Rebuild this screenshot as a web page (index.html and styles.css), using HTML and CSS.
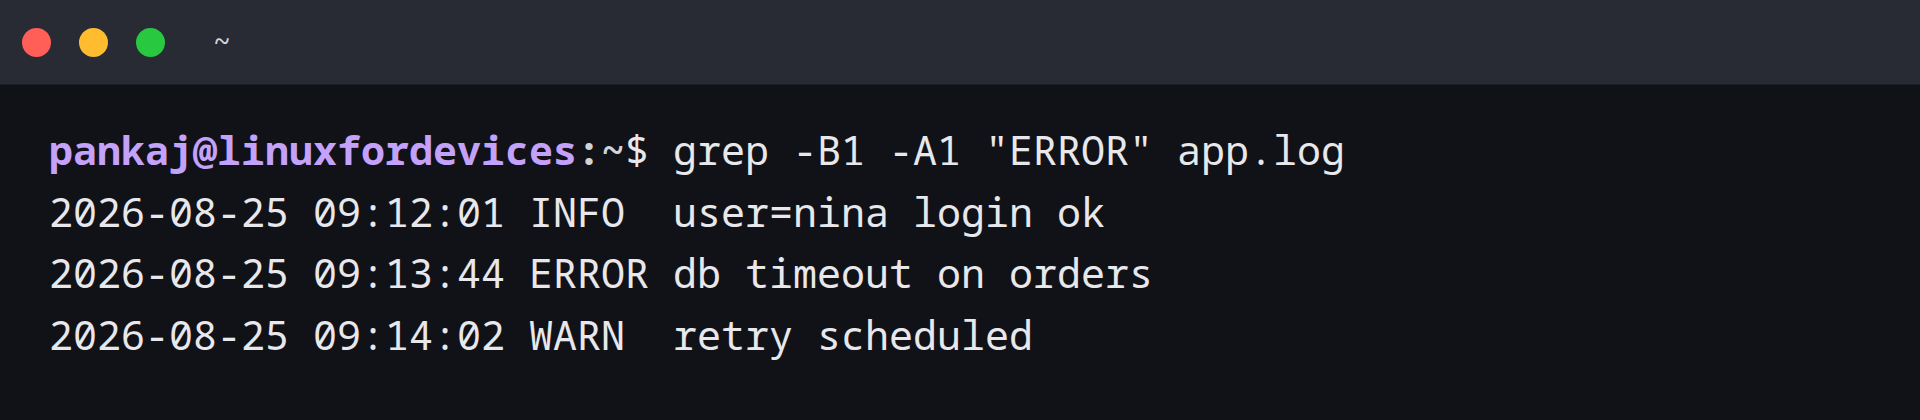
FILE: index.html
```html
<!DOCTYPE html>
<html lang="en">
<head>
<meta charset="utf-8">
<title>Terminal</title>
<link rel="stylesheet" href="styles.css">
</head>
<body>
<div class="window">
  <header class="titlebar">
    <div class="lights">
      <span class="light red"></span>
      <span class="light yellow"></span>
      <span class="light green"></span>
    </div>
    <span class="title">~</span>
  </header>
  <main class="screen">
    <div class="line"><span class="user">pankaj@linuxfordevices</span><span class="path">:~</span>$ grep -B1 -A1 "ERROR" app.log</div>
    <div class="line">2026-08-25 09:12:01 INFO  user=nina login ok</div>
    <div class="line">2026-08-25 09:13:44 ERROR db timeout on orders</div>
    <div class="line">2026-08-25 09:14:02 WARN  retry scheduled</div>
  </main>
</div>
</body>
</html>
```
FILE: styles.css
```css
* { box-sizing: border-box; }
html, body {
  margin: 0;
  padding: 0;
  background: #111217;
  height: 100%;
}
.window {
  display: flex;
  flex-direction: column;
  height: 420px;
  background: #111217;
}
.titlebar {
  height: 85px;
  flex: none;
  display: flex;
  align-items: center;
  gap: 48px;
  padding: 0 0 0 22px;
  background: #282b34;
  border-bottom: 1px solid #1c1e25;
}
.lights {
  display: flex;
  gap: 28px;
}
.light {
  width: 29px;
  height: 29px;
  border-radius: 50%;
  display: block;
}
.red { background: #ff5f57; }
.yellow { background: #febc2e; }
.green { background: #28c840; }
.title {
  font-family: "Noto Sans Mono", "DejaVu Sans Mono", monospace;
  font-size: 30px;
  color: #d4d7de;
  line-height: 1;
}
.screen {
  padding: 34px 0 0 49px;
  font-family: "Noto Sans Mono", "DejaVu Sans Mono", monospace;
  font-size: 40px;
  line-height: 61.5px;
  color: #e8e8ec;
}
.line {
  white-space: pre;
}
.user {
  color: #c4a1fb;
  font-weight: 700;
}
.path {
  color: #d0d3da;
  font-weight: 700;
}
```
